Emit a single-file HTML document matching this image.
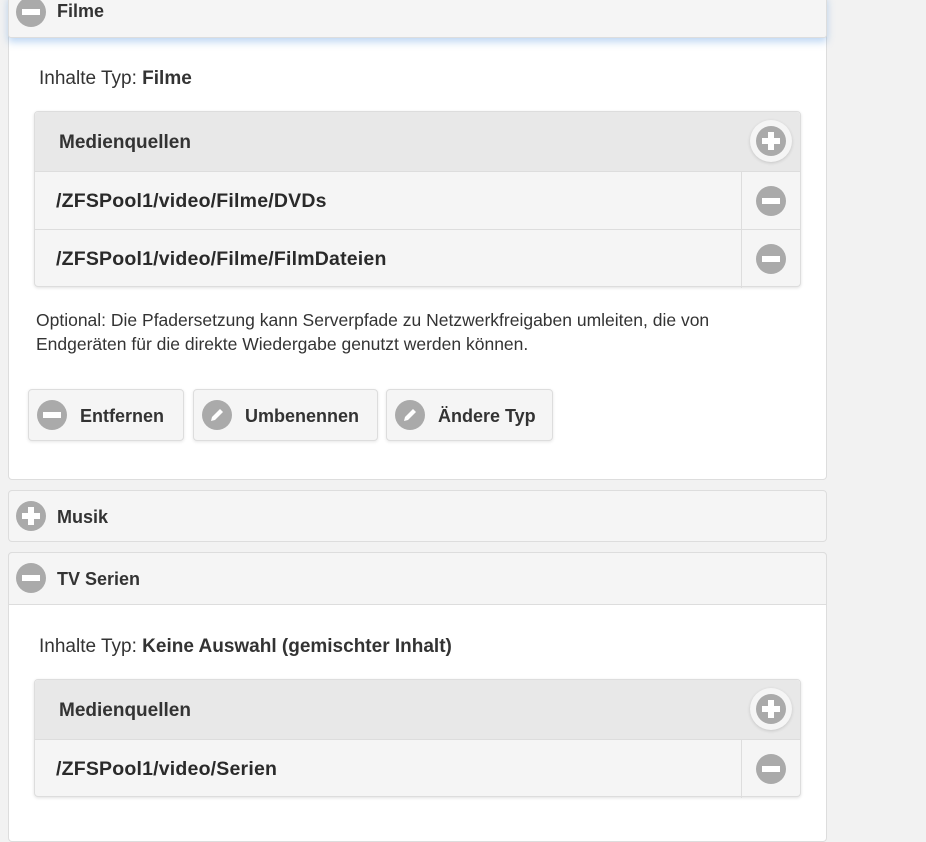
<!DOCTYPE html>
<html><head><meta charset="utf-8"><style>
*{box-sizing:border-box;margin:0;padding:0}
body{width:926px;height:821px;overflow:hidden;background:#f2f2f2;font-family:"Liberation Sans",sans-serif;color:#222;position:relative}
.abs{position:absolute}
.card{position:absolute;left:8px;width:819px;background:#fff;border:1px solid #ddd;border-radius:4px}
.hdr{position:absolute;left:8px;width:819px;background:#f5f5f5;border:1px solid #ddd;font-size:18px;font-weight:bold;color:#333}
.ic{position:absolute;width:30px;height:30px;border-radius:50%;background:#aaa}
.ic.m::after{content:"";position:absolute;left:6px;top:12px;width:18px;height:6px;background:#fff}
.ic.p::before{content:"";position:absolute;left:6px;top:12px;width:18px;height:6px;background:#fff}
.ic.p::after{content:"";position:absolute;left:12px;top:6px;width:6px;height:18px;background:#fff}
.ic svg{position:absolute;left:0;top:0}
.lbl{position:absolute;font-size:19px;color:#333}
.box{position:absolute;left:34px;width:767px;border:1px solid #ddd;border-radius:4px;background:#f5f5f5;box-shadow:0 1px 3px rgba(0,0,0,.12);overflow:visible}
.bh{position:absolute;left:0;top:0;width:100%;height:60px;background:#e8e8e8;border-bottom:1px solid #ddd;border-radius:4px 4px 0 0}
.bh span{position:absolute;left:24px;top:20px;font-size:19px;font-weight:bold;color:#333}
.row{position:absolute;left:0;width:100%;height:58px;border-bottom:1px solid #ddd}
.row span{position:absolute;left:21px;top:18px;font-size:19.5px;font-weight:bold;color:#2a2a2a;letter-spacing:0.2px}
.row .div{position:absolute;left:706px;top:0;width:1px;height:100%;background:#ddd}
.halo{position:absolute;width:42px;height:42px;border-radius:50%;background:#f5f5f5;box-shadow:0 1px 3px rgba(0,0,0,.15)}
.btn{position:absolute;top:389px;height:52px;background:#f5f5f5;border:1px solid #ddd;border-radius:4px;box-shadow:0 1px 3px rgba(0,0,0,.1);font-size:18px;font-weight:bold;color:#333}
.btn .ic{left:8px;top:10px;width:30px;height:30px}
.btn span{position:absolute;left:51px;top:16px}
</style></head><body>
<div class="card" style="top:-5px;height:485px"></div>
<div class="hdr" style="top:-5px;height:43px;box-shadow:0 4px 8px rgba(70,140,220,.35);border-radius:0 0 3px 3px">
 <div class="ic m" style="left:7px;top:1px"></div><span class="abs" style="left:48px;top:5px">Filme</span></div>
<div class="lbl" style="left:39px;top:68px">Inhalte Typ: <b>Filme</b></div>
<div class="box" style="top:111px;height:176px">
 <div class="bh"><span>Medienquellen</span></div>
 <div class="halo" style="left:715px;top:8px"><div class="ic p" style="left:6px;top:6px"></div></div>
 <div class="row" style="top:60px"><span>/ZFSPool1/video/Filme/DVDs</span><div class="div"></div><div class="ic m" style="left:721px;top:14px"></div></div>
 <div class="row" style="top:118px;border-bottom:0"><span>/ZFSPool1/video/Filme/FilmDateien</span><div class="div"></div><div class="ic m" style="left:721px;top:14px"></div></div>
</div>
<div class="abs" style="left:36px;top:308px;font-size:17.5px;line-height:24px;color:#333;width:705px">Optional: Die Pfadersetzung kann Serverpfade zu Netzwerkfreigaben umleiten, die von Endgeräten für die direkte Wiedergabe genutzt werden können.</div>
<div class="btn" style="left:28px;width:156px"><div class="ic m"></div><span>Entfernen</span></div>
<div class="btn" style="left:193px;width:185px"><div class="ic"><svg width="30" height="30" viewBox="0 0 30 30"><path d="M9 21 L10 17 L18 9 L21 12 L13 20 Z" fill="#fff"/></svg></div><span>Umbenennen</span></div>
<div class="btn" style="left:386px;width:167px"><div class="ic"><svg width="30" height="30" viewBox="0 0 30 30"><path d="M9 21 L10 17 L18 9 L21 12 L13 20 Z" fill="#fff"/></svg></div><span>Ändere Typ</span></div>
<div class="hdr" style="top:490px;height:52px;border-radius:4px"><div class="ic p" style="left:7px;top:10px"></div><span class="abs" style="left:48px;top:16px">Musik</span></div>
<div class="card" style="top:552px;height:290px"></div>
<div class="hdr" style="top:552px;height:53px;border-radius:4px 4px 0 0"><div class="ic m" style="left:7px;top:10px"></div><span class="abs" style="left:48px;top:16px">TV Serien</span></div>
<div class="lbl" style="left:39px;top:636px">Inhalte Typ: <b>Keine Auswahl (gemischter Inhalt)</b></div>
<div class="box" style="top:679px;height:118px">
 <div class="bh"><span>Medienquellen</span></div>
 <div class="halo" style="left:715px;top:8px"><div class="ic p" style="left:6px;top:6px"></div></div>
 <div class="row" style="top:60px;border-bottom:0"><span>/ZFSPool1/video/Serien</span><div class="div"></div><div class="ic m" style="left:721px;top:14px"></div></div>
</div>
</body></html>
